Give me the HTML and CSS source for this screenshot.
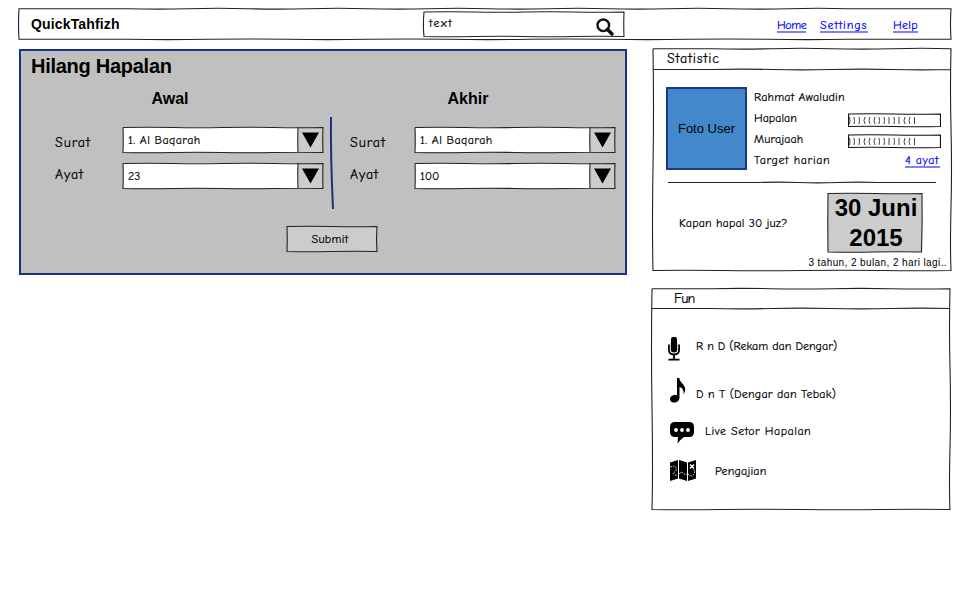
FILE: index.html
```html
<!DOCTYPE html>
<html lang="id">
<head>
<meta charset="utf-8">
<title>QuickTahfizh</title>
<link rel="stylesheet" href="styles.css">
</head>
<body>
<svg width="0" height="0" class="defs" aria-hidden="true">
  <symbol id="field" viewBox="0 0 202 28">
    <path class="white" d="M1 1H176V26H1Z"/><path class="light" d="M176 1H201V26H176Z"/>
    <path class="pen" d="M1 1.500Q26 1 51 1.500T101 1.500T151 1.500T201 1.500Q200.500 14 201 26.500Q176 26 151 26.500T101 26.500T51 26.500T1 26.500Q1.500 14 1 1.500M176 1Q175.500 14 176 26.500"/>
    <path d="M180 6.500H197L188.500 21.500Z"/>
  </symbol>
  <symbol id="meter" viewBox="0 0 93 15">
    <path class="thin" d="M.5 1Q23 .5 46 1T92.500 1V13.500Q69 14 46 13.500T.5 13.500Z"/>
    <path class="tick" d="M1.500 4Q2.500 7.500 1.500 11M6 4Q7 7.500 6 11M11 4Q12 7.500 11 11M17 4Q15 7.500 17 11M22 4Q20 7.500 22 11M27 4Q25 7.500 27 11M31 4Q32 7.500 31 11M36 4Q37 7.500 36 11M41 4V11M46 4Q47 7.500 46 11M51 4V11M57 4Q55 7.500 57 11M62 4Q60 7.500 62 11M66.500 4V11"/>
  </symbol>
</svg>

<header class="topbar">
  <svg class="frame" viewBox="0 0 934 32"><path class="pen" d="M1 .7H110Q140 1.500 170 .7T230 .7T290 .7T350 .7T410 .7T470 .7T530 .7T590 .7T650 .7T710 .7T770 .7T830 .7H933Q932 16 933 31.300H830Q790 32 750 31.300T670 31.300T590 31.300T510 31.300T430 31.300T350 31.300T270 31.300T190 31.300T110 31.300H1Q0 16 1 .7Z"/></svg>
  <strong class="brand">QuickTahfizh</strong>
  <div class="search">
    <svg class="frame" viewBox="0 0 202 27"><path class="pen" d="M1 1Q26 .5 51 1T101 1T151 1T201 1Q200.500 14 201 25.500Q176 25 151 25.500T101 25.500T51 25.500T1 25.500Q-.2 14 1 1Z"/></svg>
    <span>text</span>
    <svg class="lens" viewBox="0 0 18 18"><circle cx="7.300" cy="7.300" r="5.800" fill="none" stroke="#111" stroke-width="2.400"/><path d="M11.500 11.500L16 16" stroke="#111" stroke-width="3.400" stroke-linecap="round"/></svg>
  </div>
  <nav class="links"><a href="#" class="home">Home</a><a href="#" class="settings">Settings</a><a href="#" class="help">Help</a></nav>
</header>

<main class="page">
  <section class="lost">
    <h1>Hilang Hapalan</h1>
    <div class="ranges">
      <div class="range">
        <h2>Awal</h2>
        <div class="row"><label class="surat">Surat</label><div class="select"><svg class="frame"><use href="#field"/></svg><span class="name">1. Al Baqarah</span></div></div>
        <div class="row"><label class="ayat">Ayat</label><div class="select"><svg class="frame"><use href="#field"/></svg><span>23</span></div></div>
      </div>
      <svg class="divider" viewBox="0 0 6 94"><path d="M2 1Q1.500 40 4 93" fill="none" stroke="#1a3282" stroke-width="2"/></svg>
      <div class="range">
        <h2>Akhir</h2>
        <div class="row"><label class="surat">Surat</label><div class="select"><svg class="frame"><use href="#field"/></svg><span class="name">1. Al Baqarah</span></div></div>
        <div class="row"><label class="ayat">Ayat</label><div class="select"><svg class="frame"><use href="#field"/></svg><span>100</span></div></div>
      </div>
    </div>
    <button class="submit"><svg class="frame" viewBox="0 0 92 28"><path class="pen light" d="M1 1.500Q23 1 46 1.500T91 1.500Q90 14 91 26.500Q68 26 46 26.500T1 26.500Q1.500 14 1 1.500Z"/></svg><span>Submit</span></button>
  </section>

  <aside class="side">
    <section class="card statistic">
      <svg class="frame" viewBox="0 0 300 224"><path class="pen" d="M1 .7H60Q90 1.500 120 .7T180 .7T240 .7T299 .7Q298 40 299 80T299 160T299 222.500Q265 223 230 222.500T150 222.500T70 222.500T1 222.500Q0 180 1 120T1 .7M1 21.500H60Q90 20.800 120 21.500T180 21.500T240 21.500T299 21.500"/></svg>
      <h3>Statistic</h3>
      <div class="profile">
        <div class="photo">Foto User</div>
        <dl>
          <div><dt class="user">Rahmat Awaludin</dt></div>
          <div><dt class="hap">Hapalan</dt><dd><svg class="meter"><use href="#meter"/></svg></dd></div>
          <div><dt class="mur">Murajaah</dt><dd><svg class="meter"><use href="#meter"/></svg></dd></div>
          <div><dt class="tar">Target harian</dt><dd><a href="#" class="goal">4 ayat</a></dd></div>
        </dl>
      </div>
      <svg class="rule" viewBox="0 0 268 3"><path class="pen" d="M0 1.500H90Q110 .8 130 1.500T170 1.500T210 1.500H268"/></svg>
      <div class="finish">
        <span class="ask">Kapan hapal 30 juz?</span>
        <div class="date"><svg class="frame" viewBox="0 0 96 62"><path class="pen light" d="M1 1.500Q24 1 48 1.500T95 1.500Q95.500 30 94.500 60Q70 59.500 48 60T1 60Q.5 30 1 1.500Z"/></svg><span>30 Juni<br>2015</span></div>
      </div>
      <p class="remain">3 tahun, 2 bulan, 2 hari lagi..</p>
    </section>

    <section class="card fun">
      <svg class="frame" viewBox="0 0 300 223"><path class="pen" d="M1 .7H60Q90 0 120 .7T180 .7T240 .7T299 .7Q298 40 299 80T299 160T299 221.500Q265 221 230 221.500T150 221.500T70 221.500T1 221.500Q2 180 1 120T1 .7M1 20.500H60Q90 21.200 120 20.500T180 20.500T240 20.500T299 20.500"/></svg>
      <h3>Fun</h3>
      <ul>
        <li class="rnd"><svg width="12" height="24" viewBox="0 0 12 24"><rect x="3" y="0" width="6" height="8" rx="2"/><path d="M2.800 6H9.200V13Q9 15.500 6 15.500T2.800 13Z"/><path d="M.9 7.500V13Q.9 17.500 6 17.500T11.100 13V7.500M6 17V22M.5 22.700H11.500" fill="none" stroke="#000" stroke-width="1.800"/></svg><span>R n D (Rekam dan Dengar)</span></li>
        <li class="dnt"><svg width="16" height="25" viewBox="0 0 16 25"><path d="M7 0H9.300C9.800 5 15.500 6.500 15.200 12Q15 14.500 13.300 16.500Q14.500 10.500 9.500 9V19.500C9.500 22.500 7 24.500 4 24.500C1 24.500 0 22.800 0 21C0 18.500 3 16.500 7 17.300Z"/></svg><span>D n T (Dengar dan Tebak)</span></li>
        <li class="live"><svg width="24" height="22" viewBox="0 0 24 22"><path d="M5 0H19Q24 0 24 5V10Q24 15 19 15H14Q11 17 7.500 21.500L8 15H5Q0 15 0 10V5Q0 0 5 0Z"/><g fill="#fff"><circle cx="6" cy="8" r="1.900"/><circle cx="12" cy="8" r="1.900"/><circle cx="18" cy="8" r="1.900"/></g></svg><span>Live Setor Hapalan</span></li>
        <li class="class"><svg width="26" height="21" viewBox="0 0 26 21"><path d="M0 2.500L8 0V18.500L0 21ZM9 0L17 2.500V21L9 18.500ZM18 2.500L26 0V18.500L18 21Z"/><path d="M0 7Q5 5 6 8T3 13Q4 16 8 15M9.500 14Q11 11 13 13T17 14M18 14Q22 18 24 14T22 9" fill="none" stroke="#fff" stroke-width="1" stroke-dasharray="1.500 1.200"/><path d="M20 4.500L24 8.500M24 4.500L20 8.500" stroke="#fff" stroke-width="1.500"/></svg><span>Pengajian</span></li>
      </ul>
    </section>
  </aside>
</main>
</body>
</html>
```
FILE: styles.css
```css
* { box-sizing: border-box; }
body { margin: 0; padding: 8px 8px 0 18px; width: 960px; height: 600px; overflow: hidden; background: #fff; color: #000; font: 12px/16px "Comic Sans MS", "Comic Neue", Lato, sans-serif; }
h1, h2, h3, p, dl, dd, ul { margin: 0; padding: 0; font-weight: inherit; }
svg { display: block; flex: none; }
span, label, dt, a { white-space: nowrap; }
dt, a, label, h3, .search span, .select span, .submit span, .ask, li span { -webkit-text-stroke: .2px currentColor; }
.defs { position: absolute; }
.frame { position: absolute; left: 0; top: 0; width: 100%; height: 100%; overflow: visible; }
.pen { fill: none; stroke: #222; stroke-width: 1.1; }
.pen.light, .light { fill: #ccc; }
.thin { fill: #fff; stroke: #111; stroke-width: 1.2; }
.tick { fill: none; stroke: #444; stroke-width: 1; }
.white { fill: #fff; }
a { color: #00f; text-decoration: none; border-bottom: 2px solid #8080ff; line-height: 17px; }

.topbar { position: relative; display: flex; width: 934px; height: 32px; }
.brand { width: 405px; padding-left: 13px; font: bold 14px/32px "Liberation Sans", sans-serif; letter-spacing: .15px; }
.search { position: relative; display: flex; justify-content: space-between; width: 202px; height: 27px; margin-top: 3px; padding: 4px 11px 0 6px; letter-spacing: 1.5px; }
.lens { width: 18px; height: 18px; margin-top: 3px; }
.links { display: flex; align-items: flex-start; padding: 8px 0 0 152px; }
.links a { height: 17px; line-height: 19px; }
.home { width: 29px; letter-spacing: -.4px; }
.settings { width: 48px; margin-left: 14px; letter-spacing: .9px; }
.help { width: 25px; margin-left: 25px; letter-spacing: .3px; }

.page { display: flex; justify-content: space-between; width: 934px; padding-top: 8px; }
.lost { width: 608px; height: 226px; margin: 1px 0 0 1px; border: 2px solid #1a3282; background: #c0c0c0; }
.lost h1 { padding: 4px 0 0 10px; font: bold 20px/22px "Liberation Sans", sans-serif; letter-spacing: -.27px; }
.ranges { display: flex; height: 148px; padding: 9px 0 0 33px; }
.range { width: 270px; }
.range h2 { width: 232px; height: 40px; padding-top: 3px; text-align: center; font: bold 16px/20px "Liberation Sans", sans-serif; }
.range + .divider { margin: 30px 3px 0 5px; }
.divider { width: 6px; height: 94px; }
.divider + .range { margin-left: 11px; }
.divider + .range h2 { width: 238px; }
.row { display: flex; height: 36px; }
.row label { width: 69px; padding-left: 1px; font-size: 14px; line-height: 34px; letter-spacing: .9px; }
.row .ayat { line-height: 26px; }
.divider + .range label { width: 65px; padding-left: 1px; }
.select { position: relative; width: 202px; height: 28px; flex: none; padding-left: 6px; line-height: 29px; }
.select span { position: relative; }
.select .name { letter-spacing: .4px; }
.submit { position: relative; display: block; width: 92px; height: 28px; margin: 0 0 0 265px; border: 0; padding: 0 4px 0 0; background: none; font: inherit; color: inherit; letter-spacing: .3px; }
.submit span { position: relative; }

.side { width: 300px; }
.card { position: relative; width: 300px; }
.statistic { height: 224px; }
.statistic h3 { height: 39px; padding: 3px 0 0 15px; letter-spacing: .8px; }
.profile { display: flex; padding-left: 14px; }
.photo { width: 81px; height: 83px; border: 2px solid #1c3889; background: #48c; text-align: center; font: 13px/79px "Liberation Sans", sans-serif; }
dl { width: 186px; margin-left: 7px; }
dl div { display: flex; justify-content: space-between; height: 21px; padding-top: 2px; }
.user { letter-spacing: .2px; }
.mur { letter-spacing: .1px; }
.tar { letter-spacing: .6px; }
.meter { width: 93px; height: 15px; margin-top: 3px; margin-left: 1px; margin-right: -1px; }
.goal { display: block; width: 35px; height: 16px; letter-spacing: .5px; }
.rule { width: 268px; height: 3px; margin: 10px 0 0 16px; }
.finish { display: flex; justify-content: space-between; padding: 8px 29px 0 27px; }
.ask { margin-top: 23px; letter-spacing: .15px; }
.date { position: relative; width: 96px; height: 62px; font: bold 24px/30px "Liberation Sans", sans-serif; text-align: center; }
.date span { position: relative; top: 1px; left: 1px; }
.remain { padding-right: 5px; text-align: right; white-space: nowrap; font: 10px/17px "Liberation Sans", sans-serif; letter-spacing: .4px; }
.fun { height: 223px; margin: 16px 0 0 -1px; }
.fun h3 { height: 49px; padding: 3px 0 0 23px; letter-spacing: -.9px; }
.fun li { display: flex; align-items: flex-start; padding-left: 19px; }
.rnd { height: 41px; }
.fun .rnd { padding-left: 17px; }
.rnd span { margin: 1px 0 0 16px; }
.dnt { height: 44px; }
.dnt span { margin: 8px 0 0 10px; letter-spacing: .2px; }
.live { height: 38px; }
.live span { margin: 1px 0 0 11px; letter-spacing: .5px; }
.class span { margin: 3px 0 0 19px; letter-spacing: .2px; }
```
